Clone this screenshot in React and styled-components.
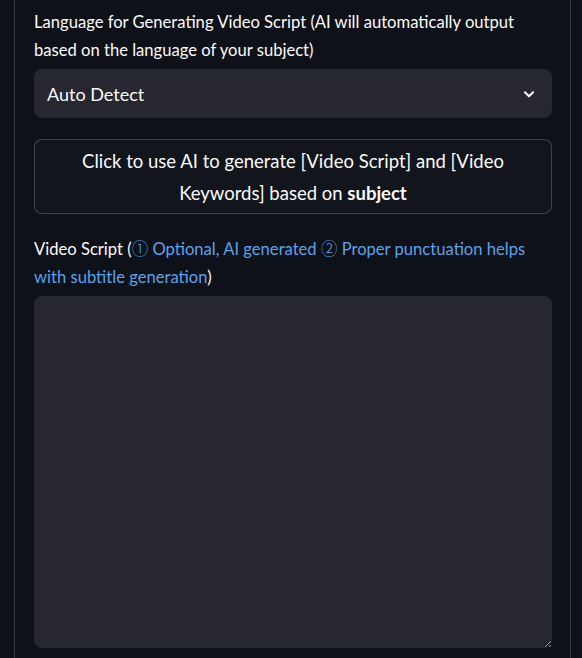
import React from 'react';
import styled, { createGlobalStyle } from 'styled-components';

const GlobalStyle = createGlobalStyle`
  html, body {
    margin: 0;
    padding: 0;
    background: #0e1117;
    color-scheme: dark;
  }
  body {
    font-family: Lato, "Noto Sans", sans-serif;
    color: #fafafa;
  }
`;

// Styled Components
const Panel = styled.div`
  margin: 0 11px 0 14px;
  min-height: 658px;
  box-sizing: border-box;
  border-left: 1px solid rgba(250, 250, 250, 0.18);
  border-right: 1px solid rgba(250, 250, 250, 0.18);
  padding: 8px 18px 10px 19px;
  display: flex;
  flex-direction: column;
`;

const Label = styled.label`
  display: block;
  font-size: 16.6px;
  line-height: 28px;
  color: #fafafa;
  margin-bottom: 5px;
`;

const Blue = styled.span`
  color: #5aa2ec;
`;

const Circled = styled.span`
  font-family: "Noto Sans CJK JP", sans-serif;
  font-weight: 300;
  font-size: 16.5px;
  line-height: 1;
`;

const SelectBox = styled.div`
  height: 49px;
  background: #262730;
  border-radius: 8px;
  display: flex;
  align-items: center;
  justify-content: space-between;
  padding: 0 16px 0 13px;
  font-size: 18px;
  color: #fafafa;
  margin-bottom: 21px;
`;

const GenerateButton = styled.button`
  height: 75px;
  background: #12151c;
  border: 1px solid rgba(250, 250, 250, 0.2);
  border-radius: 8px;
  color: #fafafa;
  font-family: Lato, "Noto Sans", sans-serif;
  font-size: 18.5px;
  line-height: 32px;
  padding: 4px 40px;
  text-align: center;
  margin-bottom: 21px;
  cursor: pointer;

  b {
    font-weight: 700;
  }
`;

const ScriptArea = styled.textarea`
  height: 352px;
  box-sizing: border-box;
  background: #262730;
  border: none;
  border-radius: 8px;
  resize: vertical;
  color: #fafafa;
  font-family: Lato, "Noto Sans", sans-serif;
  font-size: 16px;
  padding: 12px;
  outline: none;
`;

const Chevron = () => (
  <svg width="14" height="14" viewBox="0 0 24 24" fill="none" stroke="#fafafa" strokeWidth="3.5" strokeLinecap="round" strokeLinejoin="round">
    <polyline points="5 9 12 16 19 9" />
  </svg>
);

const App = () => {
  return (
    <>
      <GlobalStyle />
      <Panel>
        <Label>
          Language for Generating Video Script (AI will automatically output based on the language of your subject)
        </Label>
        <SelectBox>
          <span>Auto Detect</span>
          <Chevron />
        </SelectBox>
        <GenerateButton>
          Click to use AI to generate [Video Script] and [Video Keywords] based on <b>subject</b>
        </GenerateButton>
        <Label>
          Video Script (<Blue><Circled>①</Circled> Optional, AI generated <Circled>②</Circled> Proper punctuation helps with subtitle generation</Blue>)
        </Label>
        <ScriptArea />
      </Panel>
    </>
  );
};

export default App;
